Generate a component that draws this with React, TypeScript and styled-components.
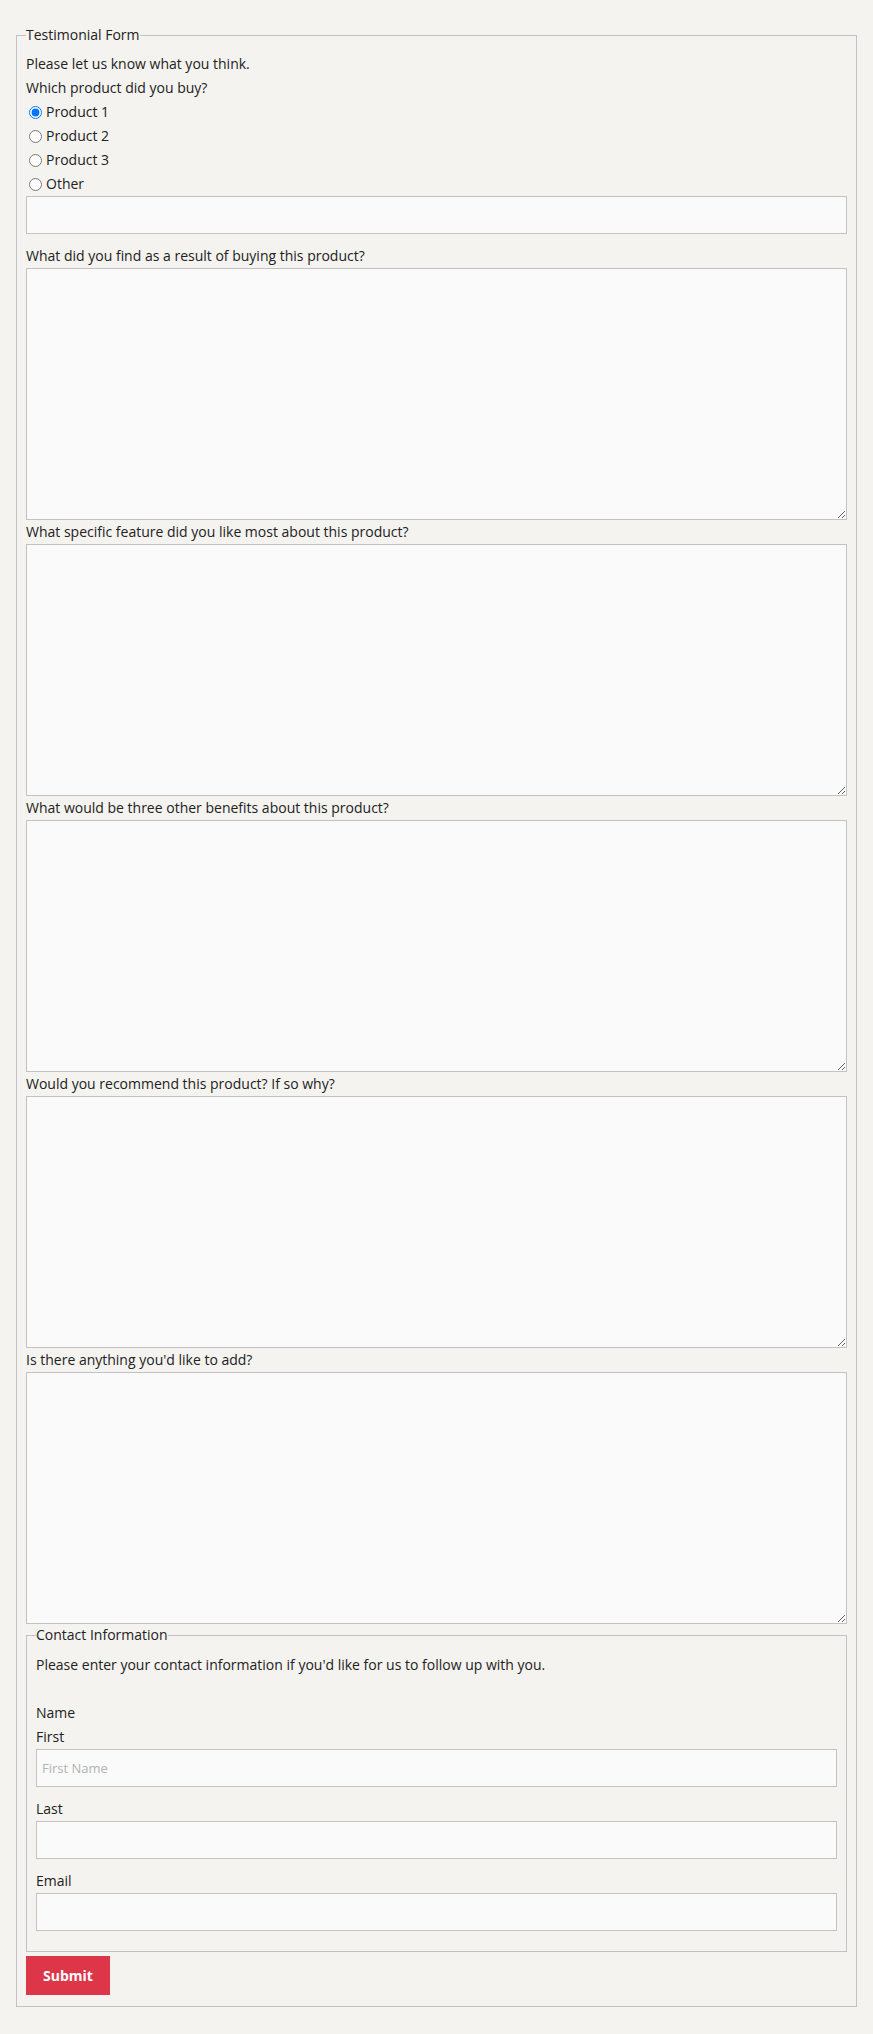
import React, { useState } from 'react'
import styled, { createGlobalStyle } from 'styled-components'

const GlobalStyle = createGlobalStyle`
html, body {
  margin: 0;
  padding: 0;
  background: #f4f3ef;
}
body {
  font-family: "Open Sans", "Liberation Sans", sans-serif;
  font-size: 14px;
  color: #222;
}
* { box-sizing: border-box; }
`

const questions = [
    "What did you find as a result of buying this product?",
    "What specific feature did you like most about this product?",
    "What would be three other benefits about this product?",
    "Would you recommend this product? If so why?",
    "Is there anything you'd like to add?",
]

const products = ["Product 1", "Product 2", "Product 3", "Other"]

const App: React.FC = () => {
    const [product, setProduct] = useState("Product 1")

    return (
        <Page>
            <GlobalStyle />
            <Form onSubmit={(e) => e.preventDefault()}>
                <Fieldset>
                    <Legend>Testimonial Form</Legend>
                    <Intro>Please let us know what you think.</Intro>
                    <Line>Which product did you buy?</Line>
                    {products.map((p) => (
                        <RadioRow key={p}>
                            <Radio
                                type="radio"
                                name="product"
                                checked={product === p}
                                onChange={() => setProduct(p)}
                            />
                            {p}
                        </RadioRow>
                    ))}
                    <TextInput type="text" />

                    {questions.map((q) => (
                        <React.Fragment key={q}>
                            <Label>{q}</Label>
                            <TextArea />
                        </React.Fragment>
                    ))}

                    <Fieldset inner>
                        <Legend>Contact Information</Legend>
                        <Intro inner>Please enter your contact information if you'd like for us to follow up with you.</Intro>
                        <Label>Name</Label>
                        <Label>First</Label>
                        <TextInput type="text" placeholder="First Name" />
                        <Label>Last</Label>
                        <TextInput type="text" />
                        <Label>Email</Label>
                        <TextInput type="email" />
                    </Fieldset>

                    <SubmitButton type="submit">Submit</SubmitButton>
                </Fieldset>
            </Form>
        </Page>
    )
}

export default App

const Page = styled.div`
padding: 24px 16px 27px;
`

const Form = styled.form`
margin: 0;
`

const Fieldset = styled.fieldset<{ inner?: boolean }>`
margin: 0;
min-width: 0;
border: 1px solid #c2c2c2;
padding: ${({ inner }) => inner ? "0 9px 10px" : "0 9px 11px"};
`

const Legend = styled.legend`
padding: 0;
font-size: 14px;
line-height: 22px;
color: #222;
`

const Intro = styled.div<{ inner?: boolean }>`
line-height: 24px;
margin-top: ${({ inner }) => inner ? "7px" : "6px"};
margin-bottom: ${({ inner }) => inner ? "24px" : "0"};
`

const Line = styled.div`
line-height: 24px;
`

const Label = styled.label`
display: block;
line-height: 24px;
`

const RadioRow = styled.label`
display: flex;
align-items: center;
height: 24px;
line-height: 24px;
`

const Radio = styled.input`
width: 13px;
height: 13px;
margin: 0 4px 0 3px;
`

const TextInput = styled.input`
display: block;
width: 100%;
height: 38px;
margin: 0 0 10px;
padding: 0 5px;
border: 1px solid #c2c2c2;
border-radius: 0;
background: #fafafa;
font-family: "Open Sans", "Liberation Sans", sans-serif;
font-size: 13px;
color: #222;
outline: none;

&::placeholder {
    color: #b3b3b3;
}
`

const TextArea = styled.textarea`
display: block;
width: 100%;
height: 252px;
margin: 0;
padding: 5px;
border: 1px solid #c2c2c2;
border-radius: 0;
background: #fafafa;
font-family: "Open Sans", "Liberation Sans", sans-serif;
font-size: 13px;
resize: vertical;
outline: none;
`

const SubmitButton = styled.button`
display: block;
width: 84px;
height: 39px;
margin-top: 4px;
border: none;
border-radius: 0;
background: #de3649;
color: #fff;
font-family: "Open Sans", "Liberation Sans", sans-serif;
font-size: 14px;
font-weight: 700;
cursor: pointer;
`
